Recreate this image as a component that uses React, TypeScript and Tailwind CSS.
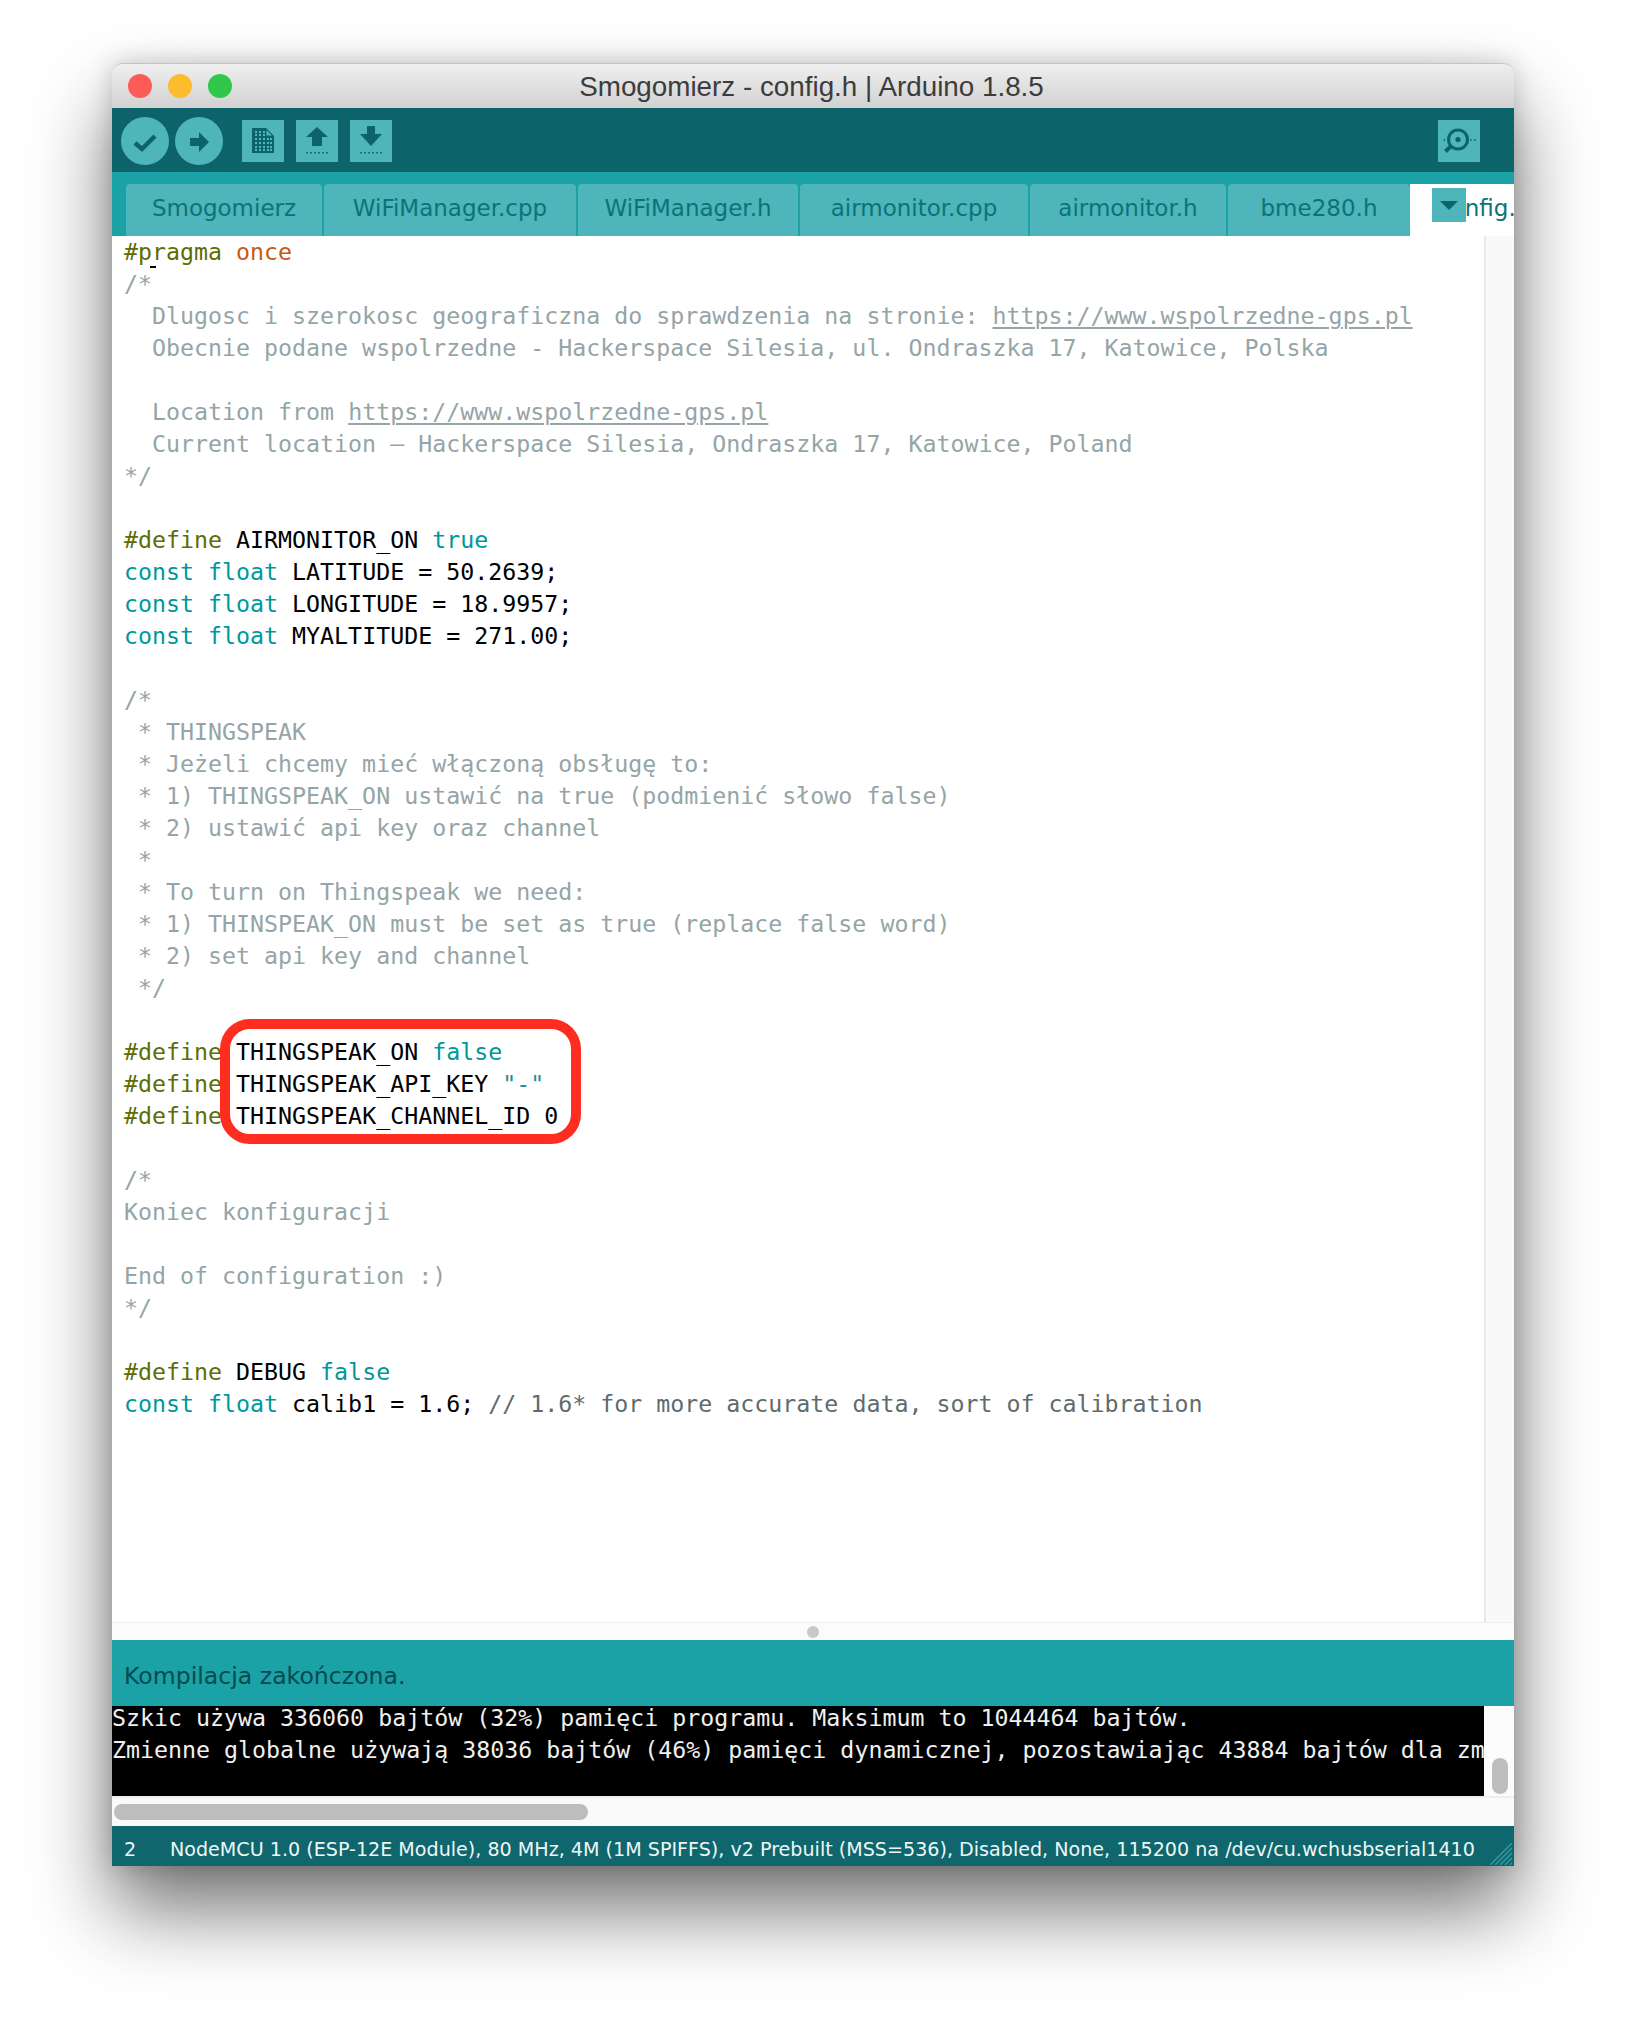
import React from "react";

type Tok = [string, string?];
const G = "text-[#95a5a6]";
const P = "text-[#5e6d03]";
const T = "text-[#00979c]";
const O = "text-[#c85a10]";
const K = "text-black";
const U = "text-[#95a5a6] underline decoration-[2px] underline-offset-[3px]";
const S = "text-[#1f8f96]";
const D = "text-[#5f6b6c]";

const LINES: Tok[][] = [
  [["#pragma ", P], ["once", O]],
  [["/*", G]],
  [["  Dlugosc i szerokosc geograficzna do sprawdzenia na stronie: ", G], ["https://www.wspolrzedne-gps.pl", U]],
  [["  Obecnie podane wspolrzedne - Hackerspace Silesia, ul. Ondraszka 17, Katowice, Polska", G]],
  [],
  [["  Location from ", G], ["https://www.wspolrzedne-gps.pl", U]],
  [["  Current location – Hackerspace Silesia, Ondraszka 17, Katowice, Poland", G]],
  [["*/", G]],
  [],
  [["#define ", P], ["AIRMONITOR_ON ", K], ["true", T]],
  [["const float ", T], ["LATITUDE = 50.2639;", K]],
  [["const float ", T], ["LONGITUDE = 18.9957;", K]],
  [["const float ", T], ["MYALTITUDE = 271.00;", K]],
  [],
  [["/*", G]],
  [[" * THINGSPEAK", G]],
  [[" * Jeżeli chcemy mieć włączoną obsługę to:", G]],
  [[" * 1) THINGSPEAK_ON ustawić na true (podmienić słowo false)", G]],
  [[" * 2) ustawić api key oraz channel", G]],
  [[" *", G]],
  [[" * To turn on Thingspeak we need:", G]],
  [[" * 1) THINSPEAK_ON must be set as true (replace false word)", G]],
  [[" * 2) set api key and channel", G]],
  [[" */", G]],
  [],
  [["#define ", P], ["THINGSPEAK_ON ", K], ["false", T]],
  [["#define ", P], ["THINGSPEAK_API_KEY ", K], ['"-"', S]],
  [["#define ", P], ["THINGSPEAK_CHANNEL_ID 0", K]],
  [],
  [["/*", G]],
  [["Koniec konfiguracji", G]],
  [],
  [["End of configuration :)", G]],
  [["*/", G]],
  [],
  [["#define ", P], ["DEBUG ", K], ["false", T]],
  [["const float ", T], ["calib1 = 1.6; ", K], ["// 1.6* for more accurate data, sort of calibration", D]],
];

const TABS: [string, string][] = [
  ["Smogomierz", "w-[196px]"],
  ["WiFiManager.cpp", "w-[252px]"],
  ["WiFiManager.h", "w-[220px]"],
  ["airmonitor.cpp", "w-[228px]"],
  ["airmonitor.h", "w-[196px]"],
  ["bme280.h", "w-[182px]"],
];

const DARK = "#0c646a";

function Dots({ y }: { y: number }) {
  return (
    <g fill={DARK}>
      {[11, 15, 19, 23, 27, 31].map((x) => (
        <rect key={x} x={x - 0.7} y={y} width="1.6" height="1.6" />
      ))}
    </g>
  );
}

function Toolbar() {
  const square = "w-[42px] h-[42px] bg-[#4eb5ba]";
  return (
    <div className="h-[64px] shrink-0 bg-[#0c646a] flex items-center pl-[9px] pt-[2px]">
      <svg className="w-[48px] h-[48px]" viewBox="0 0 48 48">
        <circle cx="24" cy="24" r="24" fill="#4eb5ba" />
        <path d="M14 26 L21 32 L34 19" fill="none" stroke={DARK} strokeWidth="4.5" />
      </svg>
      <svg className="w-[48px] h-[48px] ml-[6px]" viewBox="0 0 48 48">
        <circle cx="24" cy="24" r="24" fill="#4eb5ba" />
        <path d="M15 21 H24 V15 L34 25 L24 35 V29 H15 Z" fill={DARK} />
      </svg>
      <svg className={`${square} ml-[19px]`} viewBox="0 0 42 42">
        <path d="M10 8 H24 L32 16 V33 H10 Z" fill={DARK} />
        <path d="M24.5 10 L30 15.5 H24.5 Z" fill="#4eb5ba" />
        <g fill="#4eb5ba">
          {[13, 17, 21, 25, 28].map((x) =>
            [18, 22, 26, 29].map((y) => <rect key={`${x}-${y}`} x={x} y={y} width="2" height="2" />)
          )}
          {[13, 17, 21].map((x) =>
            [11, 14].map((y) => <rect key={`${x}-${y}`} x={x} y={y} width="2" height="2" />)
          )}
        </g>
      </svg>
      <svg className={`${square} ml-[12px]`} viewBox="0 0 42 42">
        <path d="M21 7 L32 17 H26 V26 H16 V17 H10 Z" fill={DARK} />
        <Dots y={32} />
      </svg>
      <svg className={`${square} ml-[12px]`} viewBox="0 0 42 42">
        <path d="M17 6 H25 V14 H32 L21 26 L10 14 H17 Z" fill={DARK} />
        <Dots y={32} />
      </svg>
      <svg className={`${square} ml-auto mr-[34px]`} viewBox="0 0 42 42">
        <circle cx="20" cy="19.5" r="9.5" fill="none" stroke={DARK} strokeWidth="3" />
        <circle cx="20" cy="19.5" r="2.6" fill={DARK} />
        <path d="M12.5 26.5 L7.5 31.5" stroke={DARK} strokeWidth="4" />
        <g fill={DARK}>
          <rect x="5.5" y="19" width="1.6" height="1.6" />
          <rect x="32" y="19" width="1.6" height="1.6" />
          <rect x="36" y="19" width="1.6" height="1.6" />
        </g>
      </svg>
    </div>
  );
}

function Tabs() {
  return (
    <div className="h-[64px] shrink-0 bg-[#1aa2a6] flex items-end pl-[14px] gap-[2px] overflow-hidden">
      {TABS.map(([name, w]) => (
        <div
          key={name}
          className={`${w} h-[52px] shrink-0 rounded-t-[4px] bg-[#4eb5ba] text-[#0b7378] text-center text-[23px] leading-[48px] [font-family:'DejaVu_Sans',sans-serif]`}
        >
          {name}
        </div>
      ))}
      <div className="relative -ml-[2px] w-[104px] h-[52px] shrink-0 bg-white text-[#0b7378] text-[23px] leading-[48px] pl-[28px] overflow-hidden whitespace-nowrap [font-family:'DejaVu_Sans',sans-serif]">
        config.h
        <svg className="absolute left-[22px] top-[4px] w-[34px] h-[34px]" viewBox="0 0 34 34">
          <rect width="34" height="34" fill="#4eb5ba" />
          <path d="M8 13 H26 L17 22 Z" fill={DARK} />
        </svg>
      </div>
    </div>
  );
}

function Editor() {
  return (
    <div className="relative h-[1386px] shrink-0 flex bg-white">
      <div className="w-[1372px] pl-[12px] text-[23.28px] leading-[32px] whitespace-pre overflow-hidden [font-family:'DejaVu_Sans_Mono',monospace]">
        {LINES.map((line, i) => (
          <div key={i} className="h-[32px]">
            {line.map(([t, c], j) => (
              <span key={j} className={c}>
                {t}
              </span>
            ))}
          </div>
        ))}
      </div>
      <div className="w-[30px] bg-[#f9f9f9] border-l-2 border-[#e8e8e8]" />
      <div className="absolute left-[38px] top-[30px] w-[6px] h-[2px] bg-black" />
      <div className="absolute left-[108px] top-[783px] w-[361px] h-[125px] border-[10px] border-[#ff2d20] rounded-[30px]" />
    </div>
  );
}

export default function App() {
  return (
    <div className="w-[1626px] h-[2026px] bg-white pt-[63px] pl-[112px] overflow-hidden">
      <div className="relative w-[1402px] h-[1803px] flex flex-col rounded-t-[10px] bg-white shadow-[0_44px_80px_rgba(0,0,0,0.55),0_0_24px_rgba(0,0,0,0.18)]">
        <div className="relative h-[45px] shrink-0 rounded-t-[10px] border-t border-[#c4c4c4] bg-gradient-to-b from-[#efefef] to-[#d2d2d2] flex items-center pl-[16px] gap-[16px]">
          <div className="w-[24px] h-[24px] rounded-full bg-[#fc5b57]" />
          <div className="w-[24px] h-[24px] rounded-full bg-[#fdbb2e]" />
          <div className="w-[24px] h-[24px] rounded-full bg-[#2fc84a]" />
          <div className="absolute inset-x-0 top-0 h-full pt-[2px] pr-[3px] flex items-center justify-center text-[27.8px] text-[#3c3c3c] [font-family:'Liberation_Sans',sans-serif]">
            Smogomierz - config.h | Arduino 1.8.5
          </div>
        </div>
        <Toolbar />
        <Tabs />
        <Editor />
        <div className="h-[18px] shrink-0 bg-[#fbfbfb] border-t border-[#eeeeee] flex justify-center items-center">
          <div className="w-[12px] h-[12px] rounded-full bg-[#c8c8c8]" />
        </div>
        <div className="h-[66px] shrink-0 bg-[#1aa2a6] pl-[12px] pt-[20px] text-[23.6px] leading-[32px] text-[#064a50] [font-family:'DejaVu_Sans',sans-serif]">
          Kompilacja zakończona.
        </div>
        <div className="h-[90px] shrink-0 flex bg-white">
          <div className="w-[1372px] bg-black overflow-hidden text-[#f0f0f0] text-[23.28px] leading-[32px] whitespace-pre [font-family:'DejaVu_Sans_Mono',monospace]">
            <div className="-mt-[4px]">
              <div>Szkic używa 336060 bajtów (32%) pamięci programu. Maksimum to 1044464 bajtów.</div>
              <div>Zmienne globalne używają 38036 bajtów (46%) pamięci dynamicznej, pozostawiając 43884 bajtów dla zmiennych lokalnych.</div>
            </div>
          </div>
          <div className="w-[30px] pl-[8px] pt-[52px] bg-[#fcfcfc]">
            <div className="w-[16px] h-[36px] rounded-full bg-[#bdbdbd]" />
          </div>
        </div>
        <div className="h-[30px] shrink-0 bg-[#fafafa] border-t-2 border-[#eeeeee] pl-[2px] pt-[6px]">
          <div className="w-[474px] h-[16px] rounded-full bg-[#bdbdbd]" />
        </div>
        <div className="relative h-[40px] shrink-0 bg-[#0f666c] text-[#eef7f7] text-[19.13px] pt-[4px] leading-[39px] flex whitespace-nowrap [font-family:'DejaVu_Sans',sans-serif]">
          <div className="w-[58px] shrink-0 pl-[12px]">2</div>
          <div>NodeMCU 1.0 (ESP-12E Module), 80 MHz, 4M (1M SPIFFS), v2 Prebuilt (MSS=536), Disabled, None, 115200 na /dev/cu.wchusbserial1410</div>
          <svg className="absolute right-[2px] bottom-[1px] w-[22px] h-[22px]" viewBox="0 0 22 22">
            <g stroke="#2f9ca0" strokeWidth="1.5">
              <path d="M0 22 L22 0 M5 22 L22 5 M10 22 L22 10 M15 22 L22 15 M20 22 L22 20" />
            </g>
          </svg>
        </div>
      </div>
    </div>
  );
}
